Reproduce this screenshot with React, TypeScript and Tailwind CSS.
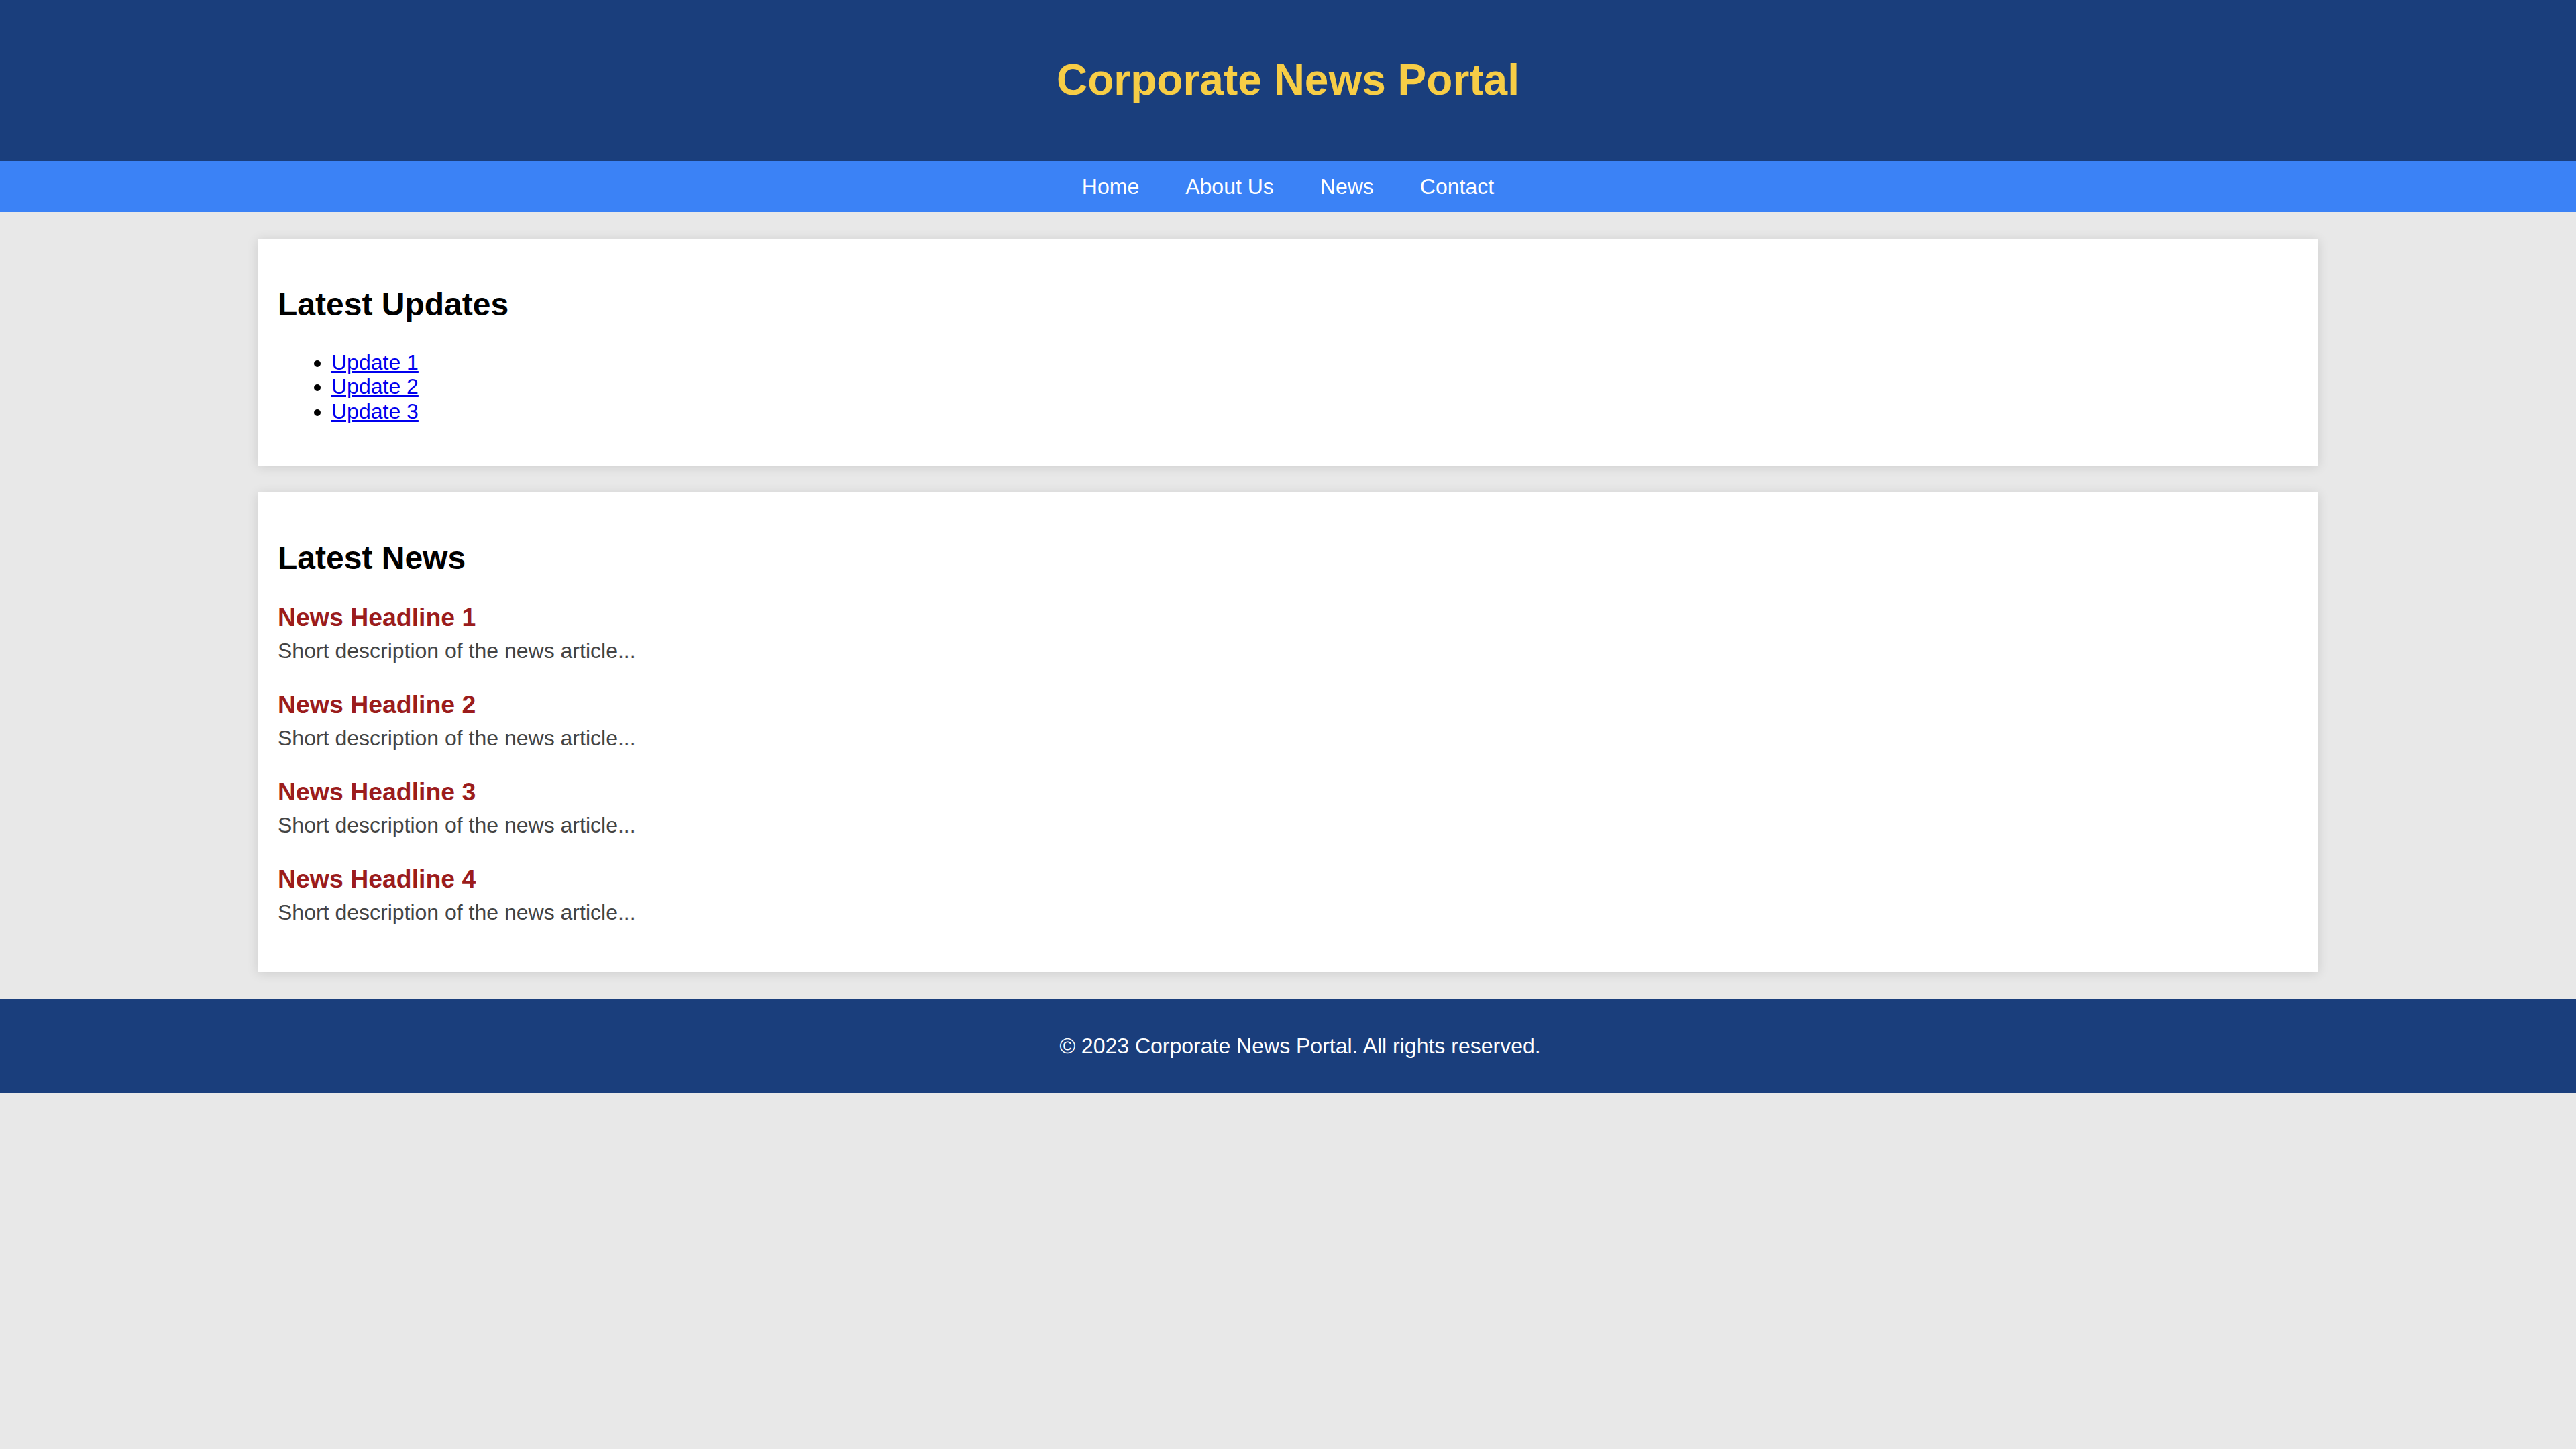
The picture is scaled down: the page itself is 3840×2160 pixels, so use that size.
const updates = ["Update 1", "Update 2", "Update 3"];

const articles = [
  { title: "News Headline 1", text: "Short description of the news article..." },
  { title: "News Headline 2", text: "Short description of the news article..." },
  { title: "News Headline 3", text: "Short description of the news article..." },
  { title: "News Headline 4", text: "Short description of the news article..." },
];

const navLinks = ["Home", "About Us", "News", "Contact"];

export default function App() {
  return (
    <div className="min-h-screen bg-[#e8e8e8] font-['Liberation_Sans',Arial,sans-serif] text-[32px] leading-[1.15]">
      <header className="bg-[#1a3e7c] py-[40px] text-center">
        <h1 className="my-[43px] text-[64px] font-bold leading-[1.15] text-[#f7cd46]">
          Corporate News Portal
        </h1>
      </header>

      <nav className="bg-[#3b82f6] py-[20px]">
        <ul className="flex justify-center gap-[69px]">
          {navLinks.map((link) => (
            <li key={link}>
              <a href="#" className="text-white">
                {link}
              </a>
            </li>
          ))}
        </ul>
      </nav>

      <main className="mx-auto w-[80%] py-[40px]">
        <section className="mb-[40px] bg-white p-[30px] shadow-[0_2px_16px_rgba(0,0,0,0.12)]">
          <h2 className="mt-[40px] mb-[40px] text-[48px] font-bold leading-[1.15] text-black">
            Latest Updates
          </h2>
          <ul className="mb-[32px] list-disc pl-[80px]">
            {updates.map((u) => (
              <li key={u}>
                <a href="#" className="text-[#0000ee] underline">
                  {u}
                </a>
              </li>
            ))}
          </ul>
        </section>

        <section className="bg-white p-[30px] shadow-[0_2px_16px_rgba(0,0,0,0.12)]">
          <h2 className="mt-[40px] mb-[40px] text-[48px] font-bold leading-[1.15] text-black">
            Latest News
          </h2>
          <div>
            {articles.map((a) => (
              <article key={a.title} className="mb-[40px]">
                <h3 className="mb-[10px] text-[37.44px] font-bold leading-[1.15] text-[#9b1c1c]">
                  {a.title}
                </h3>
                <p className="text-[#444]">{a.text}</p>
              </article>
            ))}
          </div>
        </section>
      </main>

      <footer className="bg-[#1a3e7c] py-[20px] pl-[36px] text-center text-white">
        <p className="my-[32px]">© 2023 Corporate News Portal. All rights reserved.</p>
      </footer>
    </div>
  );
}
